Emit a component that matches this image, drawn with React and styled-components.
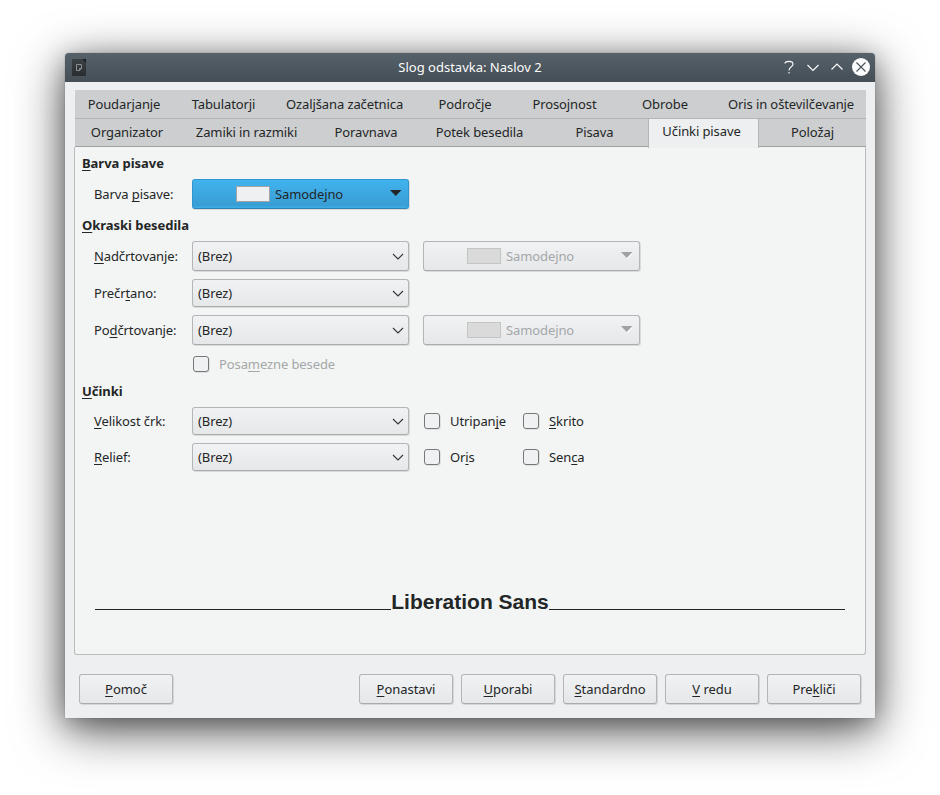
import React from "react";
import styled, { createGlobalStyle, css } from "styled-components";

const GlobalStyle = createGlobalStyle`
  *, *::before, *::after { box-sizing: border-box; }
  body {
    margin: 0;
    background: #ffffff;
    color: #232627;
    font-family: "Noto Sans", "Open Sans", sans-serif;
    font-size: 13px;
    line-height: 18px;
    letter-spacing: -0.1px;
  }
`;

const Desktop = styled.main`
  width: 940px;
  height: 795px;
  padding: 53px 65px 0;
  overflow: hidden;
`;

const Dialog = styled.section`
  display: flex;
  flex-direction: column;
  width: 810px;
  height: 665px;
  border-radius: 4px 4px 0 0;
  background: #eeeff1;
  box-shadow:
    0 0 1px rgba(0, 0, 0, 0.5),
    0 12px 50px rgba(0, 0, 0, 0.66),
    0 5px 24px rgba(0, 0, 0, 0.27);
`;

const TitleBar = styled.header`
  display: grid;
  grid-template-columns: 98px 1fr 98px;
  align-items: center;
  height: 29px;
  padding-bottom: 1px;
  border-radius: 4px 4px 0 0;
  background: linear-gradient(#56616a, #454e55);
  color: #fcfcfc;
`;

const AppIcon = styled.svg`
  width: 14px;
  height: 18px;
  margin-left: 7px;
`;

const Title = styled.h1`
  margin: 0;
  font-size: 13px;
  font-weight: 400;
  letter-spacing: 0;
  text-align: center;
`;

const WindowControls = styled.div`
  display: flex;
  justify-content: flex-end;
  padding-right: 2px;
`;

const ControlIcon = styled.svg`
  width: 24px;
  height: 24px;
  fill: none;
  stroke: #fcfcfc;
  stroke-width: 1.15;
`;

const Tabs = styled.nav`
  margin: 8px 9px 0 10px;
`;

const TabRow = styled.div`
  display: grid;
  grid-template-columns: ${(p) => p.$columns};
  height: ${(p) => (p.$last ? 28 : 29)}px;
  background: #cdcecf;
  border-bottom: 1px solid ${(p) => (p.$last ? "#9fa1a3" : "#b0b2b4")};
`;

const Tab = styled.div`
  height: 27px;
  text-align: center;
  line-height: ${(p) => (p.$lower ? 26 : 28)}px;
  white-space: nowrap;
  ${(p) =>
    p.$active &&
    css`
      height: 30px;
      margin-top: -1px;
      border: solid #b3b5b7;
      border-width: 1px 1px 0;
      border-radius: 2px 2px 0 0;
      background: #eeeff1;
      position: relative;
      z-index: 1;
      padding-right: 4px;
      line-height: 24px;
    `}
`;

const Panel = styled.div`
  display: flex;
  flex-direction: column;
  width: 792px;
  height: 508px;
  margin: 0 0 0 9px;
  padding: 6px 20px 0 7px;
  border: 1px solid #b9bbbd;
  border-top-width: 0;
  border-radius: 0 0 3px 3px;
  background: #f3f5f4;
`;

const Heading = styled.h2`
  height: 20px;
  margin: 0;
  font-size: 13px;
  font-weight: 700;
  letter-spacing: -0.04px;
  line-height: 20px;
`;

const Row = styled.div`
  display: grid;
  grid-template-columns: 98px 217px 217px;
  align-items: center;
  height: ${(p) => p.$height || 28}px;
  margin: ${(p) => p.$top ?? 8}px 0 ${(p) => p.$bottom || 0}px 12px;
`;

const RowExtra = styled.div`
  display: flex;
  width: 217px;
  margin-left: 14px;
  height: 100%;
  align-items: center;
`;

const Key = styled.span`
  text-decoration: underline;
  text-decoration-thickness: 1px;
  text-decoration-skip-ink: none;
  text-underline-offset: 2px;
`;

const raised = css`
  border: 1px solid #b3b5b7;
  border-bottom-color: #a9abad;
  border-radius: 3px;
  background: linear-gradient(#f1f2f3, #e6e7e9);
  box-shadow: 1px 1px 0 rgba(0, 0, 0, 0.1);
`;

const Select = styled.div`
  ${raised}
  display: flex;
  align-items: center;
  justify-content: space-between;
  width: 217px;
  height: 100%;
  padding: 0 4px 0 5px;
`;

const Chevron = styled.svg`
  width: 13px;
  height: 12px;
  fill: none;
  stroke: #31363b;
  stroke-width: 1.1;
`;

const ColorButton = styled.div`
  ${raised}
  display: flex;
  align-items: center;
  width: 217px;
  height: 30px;
  padding: 0 6px 0 43px;
  color: ${(p) => (p.$disabled ? "#a5a7a9" : "inherit")};
  ${(p) =>
    p.$focused &&
    css`
      border-color: #3196cd;
      border-bottom-color: #2a84b5;
      background: linear-gradient(#41b3ef, #399dd4 90%, #3daee9);
    `}
`;

const Swatch = styled.span`
  width: 34px;
  height: 16px;
  margin-right: 5px;
  border: 1px solid ${(p) => (p.$disabled ? "#c3c4c4" : "#a4a4a4")};
  background: ${(p) => (p.$disabled ? "#dadada" : "#eff0f1")};
`;

const DropArrow = styled.svg`
  width: 13px;
  height: 8px;
  margin: -2px 0 0 auto;
`;

const Check = styled.label`
  display: flex;
  align-items: center;
  gap: 10px;
  width: ${(p) => p.$width || 99}px;
  margin-left: 1px;
  white-space: nowrap;
  color: ${(p) => (p.$disabled ? "#a5a7a9" : "inherit")};
`;

const Box = styled.span`
  flex: none;
  width: 16px;
  height: 16px;
  border: 1px solid #75787b;
  border-radius: 3px;
  background: #f0f1f2;
  box-shadow: 1px 1px 0 rgba(0, 0, 0, 0.08);
`;

const Preview = styled.div`
  display: flex;
  width: 750px;
  margin: 118px 0 0 13px;
  font-family: "Liberation Sans", sans-serif;
  font-size: 21px;
  font-weight: 700;
  letter-spacing: 0;
  line-height: 26px;
  white-space: nowrap;
`;

const Rule = styled.span`
  flex: 1;
  height: 21px;
  border-bottom: 1px solid #232627;
`;

const Footer = styled.footer`
  display: flex;
  gap: 8px;
  padding: 19px 14px 0;
`;

const Button = styled.button`
  ${raised}
  width: 94px;
  height: 30px;
  padding: 0;
  color: inherit;
  font: inherit;
  letter-spacing: -0.04px;
  &:first-child { margin-right: auto; }
`;

/* "_" precedes the letter that carries the keyboard shortcut. */
const Mnemonic = ({ text }) => {
  const i = text.indexOf("_");
  return (
    <span>
      {text.slice(0, i)}
      <Key>{text[i + 1]}</Key>
      {text.slice(i + 2)}
    </span>
  );
};

const DropDown = () => (
  <Select>
    <span>(Brez)</span>
    <Chevron viewBox="0 0 13 12">
      <path d="M2 4 7 9l5-5" />
    </Chevron>
  </Select>
);

const ColorPicker = ({ focused, disabled }) => (
  <ColorButton $focused={focused} $disabled={disabled}>
    <Swatch $disabled={disabled} />
    <span>Samodejno</span>
    <DropArrow viewBox="0 0 13 8">
      {disabled && <path d="M2 2h11L7.500 8z" fill="#fff" />}
      <path d="M1 1h11.500L6.700 7z" fill={disabled ? "#a0a1a2" : "#232627"} />
    </DropArrow>
  </ColorButton>
);

const CheckBox = ({ text, width, disabled }) => (
  <Check $width={width} $disabled={disabled}>
    <Box />
    <Mnemonic text={text} />
  </Check>
);

const upperTabs = ["Poudarjanje", "Tabulatorji", "Ozaljšana začetnica", "Področje", "Prosojnost", "Obrobe", "Oris in oštevilčevanje"];
const lowerTabs = ["Organizator", "Zamiki in razmiki", "Poravnava", "Potek besedila", "Pisava", "Učinki pisave", "Položaj"];
const buttons = ["_Pomoč", "_Ponastavi", "_Uporabi", "_Standardno", "_V redu", "Pre_kliči"];

export default function App() {
  return (
    <Desktop>
      <GlobalStyle />
      <Dialog>
        <TitleBar>
          <AppIcon viewBox="0 0 14 18">
            <defs>
              <linearGradient id="page" x1="0" y1="0" x2="0" y2="1">
                <stop offset="0" stopColor="#3c4145" />
                <stop offset="1" stopColor="#2a2d2f" />
              </linearGradient>
            </defs>
            <path d="M0 1h10l4 4v13H0z" fill="url(#page)" />
            <path d="M10 1h4v4z" fill="#1b1e20" />
            <path d="M4.500 6.500h5v4l-2 2h-3zM9.500 10.500h-2v2" fill="none" stroke="#8b8e90" />
          </AppIcon>
          <Title>Slog odstavka: Naslov 2</Title>
          <WindowControls>
            <ControlIcon viewBox="0 0 24 24">
              <path d="M8 8.500C8 6.800 9.700 6.300 12 6.300s4 .8 4 2.900c0 2.800-4 2.300-4 6.300M12 17v1.600" />
            </ControlIcon>
            <ControlIcon viewBox="0 0 24 24">
              <path d="m6.500 10 5.500 5.500 5.500-5.500" />
            </ControlIcon>
            <ControlIcon viewBox="0 0 24 24">
              <path d="m6.500 14.500 5.500-5.500 5.500 5.500" />
            </ControlIcon>
            <ControlIcon viewBox="0 0 24 24">
              <circle cx="12" cy="12" r="9" fill="#fcfcfc" stroke="none" />
              <path d="m7.500 7.500 9 9m0-9-9 9" stroke="#4d565d" />
            </ControlIcon>
          </WindowControls>
        </TitleBar>

        <Tabs>
          <TabRow $columns="98px 101px 141px 100px 99px 102px 1fr">
            {upperTabs.map((t) => (
              <Tab key={t}>{t}</Tab>
            ))}
          </TabRow>
          <TabRow $last $columns="104px 135px 104px 123px 107px 111px 1fr">
            {lowerTabs.map((t) => (
              <Tab key={t} $lower $active={t === "Učinki pisave"}>{t}</Tab>
            ))}
          </TabRow>
        </Tabs>

        <Panel>
          <Heading><Mnemonic text="_Barva pisave" /></Heading>
          <Row $height={30} $top={6} $bottom={6}>
            <Mnemonic text="Barva _pisave:" />
            <ColorPicker focused />
          </Row>

          <Heading><Mnemonic text="_Okraski besedila" /></Heading>
          <Row $height={30} $top={6}>
            <Mnemonic text="_Nadčrtovanje:" />
            <DropDown />
            <RowExtra><ColorPicker disabled /></RowExtra>
          </Row>
          <Row>
            <Mnemonic text="Prečr_tano:" />
            <DropDown />
          </Row>
          <Row $height={30}>
            <Mnemonic text="Po_dčrtovanje:" />
            <DropDown />
            <RowExtra><ColorPicker disabled /></RowExtra>
          </Row>
          <Row $height={20} $top={9} $bottom={7}>
            <span />
            <CheckBox text="Posa_mezne besede" width={200} disabled />
          </Row>

          <Heading><Mnemonic text="_Učinki" /></Heading>
          <Row $top={6}>
            <Mnemonic text="_Velikost črk:" />
            <DropDown />
            <RowExtra>
              <CheckBox text="Utripan_je" width={98} />
              <CheckBox text="_Skrito" />
            </RowExtra>
          </Row>
          <Row>
            <Mnemonic text="_Relief:" />
            <DropDown />
            <RowExtra>
              <CheckBox text="Or_is" width={98} />
              <CheckBox text="Sen_ca" />
            </RowExtra>
          </Row>

          <Preview>
            <Rule />
            <span>Liberation Sans</span>
            <Rule />
          </Preview>
        </Panel>

        <Footer>
          {buttons.map((b) => (
            <Button key={b}><Mnemonic text={b} /></Button>
          ))}
        </Footer>
      </Dialog>
    </Desktop>
  );
}
